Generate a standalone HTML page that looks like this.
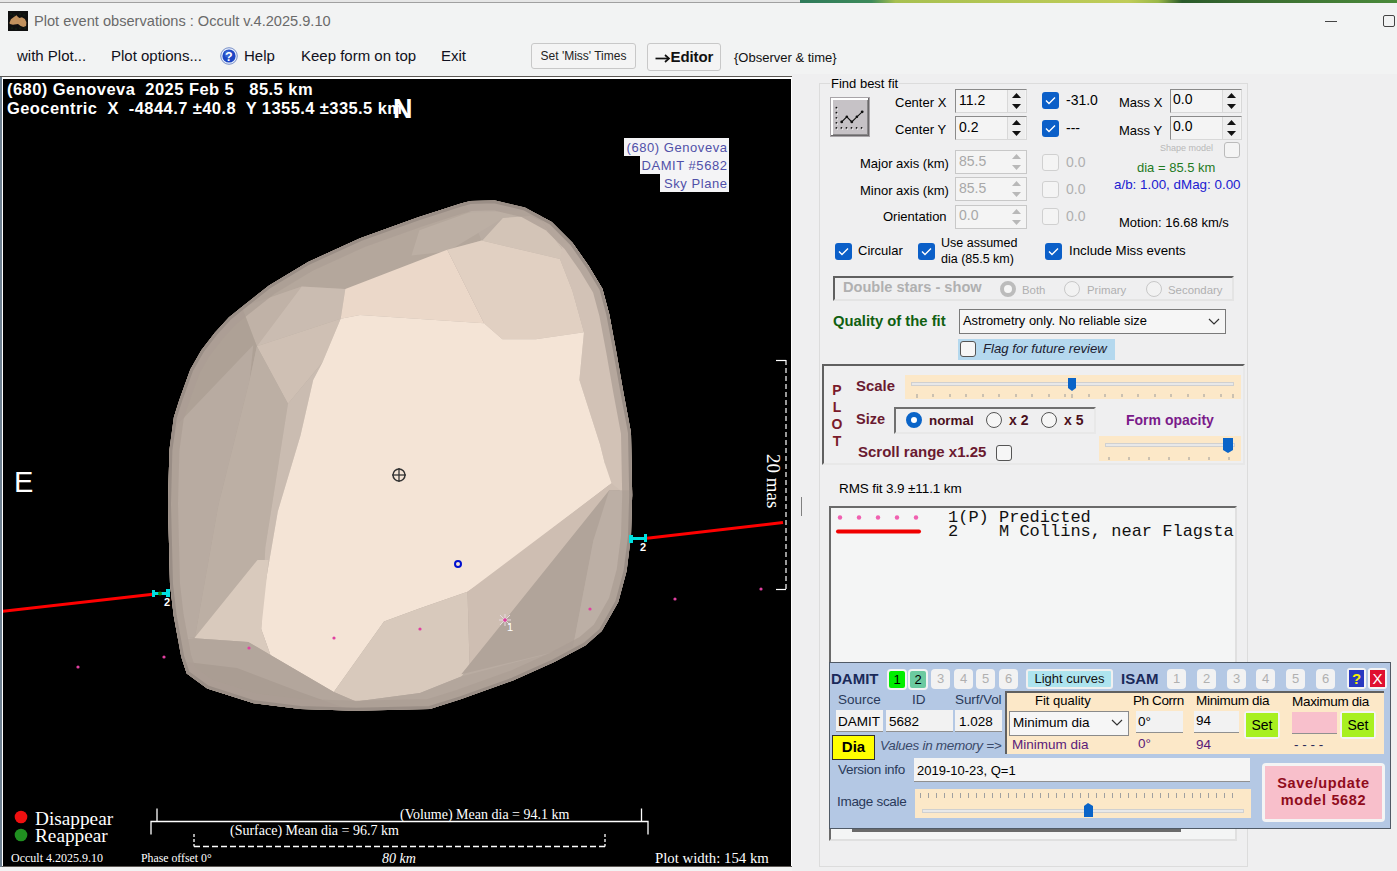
<!DOCTYPE html>
<html><head><meta charset="utf-8">
<style>
*{margin:0;padding:0;box-sizing:border-box}
html,body{width:1397px;height:871px;overflow:hidden;background:#f2f3f3;font-family:"Liberation Sans",sans-serif;color:#000}
.a{position:absolute;white-space:nowrap}
.ui{font-size:13px;line-height:15px}
.ser{font-family:"Liberation Serif",serif}
.mono{font-family:"Liberation Mono",monospace}
</style></head><body>
<!-- top strip -->
<div class="a" style="left:0;top:0;width:800px;height:3px;background:#e6e6e6;border-bottom:1px solid #a0a0a0"></div>
<div class="a" style="left:800px;top:0;width:597px;height:3px;background:linear-gradient(90deg,#2f7a5a 0%,#3d8a5a 12%,#a8c050 16%,#c0cc58 55%,#9ab848 60%,#2a5a2a 64%,#3a6a30 75%,#4a8a3a 100%)"></div>
<!-- title bar -->
<div class="a" style="left:8px;top:11px;width:20px;height:20px;background:#101010"></div>
<svg class="a" style="left:8px;top:11px" width="20" height="20"><path d="M1.4,11.9 L2.9,8.3 L5.9,6 L8.5,4.2 L10,6 L11.5,6.9 L13.9,6.3 L16.9,8 L18.4,11.3 L18.1,14.9 L15.4,16.1 L12.7,14.9 L10,13.1 L5,13.7 L2,13.1 Z" fill="#c2925e"/><g fill="#1d4a1d"><circle cx="3" cy="3" r=".6"/><circle cx="6" cy="4" r=".6"/><circle cx="12" cy="3" r=".6"/><circle cx="16" cy="4" r=".6"/><circle cx="4" cy="17" r=".6"/><circle cx="8" cy="18" r=".6"/><circle cx="12" cy="17" r=".6"/><circle cx="17" cy="17" r=".6"/></g></svg>
<div class="a" style="left:34px;top:12px;font-size:14.6px;line-height:18px;color:#6a6a6a">Plot event observations : Occult v.4.2025.9.10</div>
<div class="a" style="left:1325px;top:21px;width:12px;height:1px;background:#444"></div>
<div class="a" style="left:1383px;top:15px;width:12px;height:12px;border:1px solid #444;border-radius:2px"></div>
<!-- menu -->
<div class="a" style="left:17px;top:47px;font-size:15px;line-height:17px;color:#101020">with Plot...</div>
<div class="a" style="left:111px;top:47px;font-size:15px;line-height:17px;color:#101020">Plot options...</div>
<svg class="a" style="left:220px;top:47px" width="18" height="18"><circle cx="9" cy="9" r="8.3" fill="#e4ecfa" stroke="#7a90c8" stroke-width="1"/><circle cx="9" cy="9" r="6.6" fill="#1d46c4"/><circle cx="8" cy="7" r="3.5" fill="#4a78e0" opacity="0.6"/><text x="8.8" y="13.8" font-size="12.5" font-weight="bold" text-anchor="middle" fill="#fff" font-family="Liberation Sans">?</text></svg>
<div class="a" style="left:244px;top:47px;font-size:15px;line-height:17px;color:#101020">Help</div>
<div class="a" style="left:301px;top:47px;font-size:15px;line-height:17px;color:#101020">Keep form on top</div>
<div class="a" style="left:441px;top:47px;font-size:15px;line-height:17px;color:#101020">Exit</div>
<div class="a" style="left:531px;top:43px;width:105px;height:26px;border:1px solid #c8c8c8;border-radius:3px;background:#f4f4f4;font-size:12px;line-height:24px;text-align:center;color:#222">Set 'Miss' Times</div>
<div class="a" style="left:647px;top:43px;width:74px;height:28px;border:1px solid #c8c8c8;border-radius:3px;background:#f4f4f4"></div><svg class="a" style="left:655px;top:53px" width="16" height="10"><line x1="0.5" y1="5.5" x2="13.5" y2="5.5" stroke="#111" stroke-width="1.7"/><polyline points="10,2 14,5.5 10,9" fill="none" stroke="#111" stroke-width="1.7"/></svg><div class="a" style="left:670.5px;top:48px;font-size:15px;font-weight:bold;line-height:18px;color:#111;letter-spacing:-0.1px">Editor</div>
<div class="a" style="left:734px;top:49px;font-size:13px;line-height:17px;color:#111">{Observer &amp; time}</div>

<!-- plot frame -->
<div class="a" style="left:0;top:76px;width:792px;height:791px;background:#5c5854"></div>
<div class="a" style="left:0;top:77px;width:2px;height:790px;background:#6e8090"></div>
<div class="a" style="left:2px;top:77px;width:790px;height:789px;background:#fff"></div>
<div id="plot" class="a" style="left:3px;top:79px;width:788px;height:787px;background:#000;overflow:hidden"></div>

<!-- PLOT_SVG -->
<svg class="a" style="left:3px;top:79px" width="788" height="787" viewBox="3 79 788 787">
<g id="ast">
<defs><clipPath id="clipA"><polygon points="169.4,450.0 173.9,417.0 179.3,400.0 190.3,369.6 201.3,350.3 215.0,332.4 229.0,317.2 242.7,306.2 269.0,285.5 308.0,262.0 360.0,238.2 417.4,217.6 460.0,203.8 470.0,201.0 494.4,200.3 525.0,207.5 551.8,222.1 572.5,242.8 588.6,265.8 602.4,288.7 609.2,314.0 616.1,350.7 623.0,390.0 631.0,432.8 632.2,494.8 631.0,536.0 626.6,571.0 618.3,602.0 601.8,631.0 585.3,645.4 554.3,661.9 513.0,680.5 461.3,699.0 430.0,708.9 356.0,710.7 300.3,708.9 253.7,703.3 207.2,688.4 186.7,673.5 181.2,656.8 173.7,615.8 170.0,584.2 168.0,504.0"/></clipPath></defs>
<g clip-path="url(#clipA)">
<polygon points="150.0,150.0 700.0,150.0 700.0,750.0 150.0,750.0" fill="#b9aca2"/>
<polygon points="200.0,330.0 242.0,307.0 301.7,286.6 345.3,288.9 360.0,288.7 447.2,249.7 481.7,240.5 460.0,190.0 200.0,190.0" fill="#b4a79c"/>
<polygon points="411.5,255.4 419.4,230.2 468.2,212.8 526.5,210.5 545.0,216.0 502.9,218.0 447.7,251.4" fill="#bcafa4"/>
<polygon points="447.7,251.4 482.4,240.4 502.9,218.0 529.6,216.0 542.2,221.5 569.0,258.5 560.0,258.9 481.7,240.5" fill="#d3c4b7"/>
<polygon points="542.2,221.5 560.0,200.0 640.0,260.0 640.0,320.0 584.0,332.3 572.5,291.0 560.0,258.9 569.0,258.5" fill="#cdbeb2"/>
<polygon points="242.0,307.2 301.7,286.6 256.9,346.3" fill="#c0b2a7"/>
<polygon points="301.7,286.6 345.3,288.9 340.7,318.7 256.9,346.3" fill="#cabcb1"/>
<polygon points="256.9,346.3 340.7,318.7 322.4,362.4 288.0,403.7" fill="#cfc0b4"/>
<polygon points="242.0,307.2 256.9,346.3 249.7,380.0 218.5,504.9 195.0,637.5 150.0,640.0 150.0,300.0" fill="#aea196"/>
<polygon points="253.3,345.0 177.6,424.2 160.0,500.0 160.0,640.0 195.0,637.5 218.5,504.9 249.7,380.0" fill="#b8aba1"/>
<polygon points="256.9,346.3 288.0,403.7 265.3,547.8 261.4,629.8 195.0,637.5 218.5,504.9 249.7,380.0" fill="#bcafa4"/>
<polygon points="288.0,403.7 322.4,362.4 313.2,380.0 300.5,435.6 277.8,511.4 262.6,600.0 261.2,628.9 265.3,547.8" fill="#cabcb1"/>
<polygon points="345.3,288.9 447.2,249.7 484.0,323.2 360.0,315.0 340.7,318.7" fill="#ebd8c9"/>
<polygon points="447.2,249.7 481.7,240.5 560.0,258.9 572.5,291.0 584.0,332.3 535.8,339.2 502.4,339.2 484.0,323.2" fill="#e1d0c2"/>
<polygon points="560.0,258.9 563.3,242.8 620.0,250.0 640.0,300.0 640.0,500.0 609.2,488.0 604.6,462.7 600.0,444.3 579.4,380.0 584.0,332.3 572.5,291.0" fill="#d2c2b6"/>
<polygon points="340.7,318.7 360.0,315.0 484.0,323.2 502.4,339.2 535.8,339.2 584.0,332.3 579.4,380.0 600.0,444.3 604.6,462.7 611.5,483.3 485.3,580.0 467.5,591.7 420.0,608.2 384.0,621.4 333.8,692.1 270.5,654.9 261.2,628.9 262.6,600.0 277.8,511.4 300.5,435.6 313.2,380.0 322.4,362.4" fill="#f4e4d6"/>
<polygon points="333.8,692.1 384.0,621.4 420.0,608.2 467.5,591.7 469.6,666.0 461.3,676.4 420.0,692.9 356.0,701.4" fill="#d8c9bc"/>
<polygon points="611.5,483.3 620.0,490.0 461.3,674.3 469.6,666.0 467.5,591.7" fill="#cebeb2"/>
<polygon points="620.0,490.0 609.2,490.2 461.3,674.3 572.9,647.4 593.5,540.0" fill="#b1a49a"/>
<polygon points="609.2,490.2 640.0,490.2 640.0,531.5 635.0,580.0 601.8,631.0 572.9,647.4 593.5,540.0" fill="#bcafa5"/>
<polygon points="257.5,560.0 268.6,560.0 261.2,628.9 270.5,654.9 248.2,641.9 194.2,638.2" fill="#d9cabd"/>
<polygon points="150.0,645.6 194.2,638.2 248.2,641.9 270.5,654.9 333.8,692.1 356.0,701.4 420.0,692.9 461.3,676.4 572.9,647.4 601.8,631.0 640.0,640.0 640.0,740.0 150.0,740.0" fill="#b3a69c"/>
<polygon points="170.0,660.0 237.0,668.0 300.0,692.0 356.0,712.0 253.7,720.0 170.0,720.0" fill="#aa9d93"/>
<polygon points="169.4,450.0 173.9,417.0 179.3,400.0 190.3,369.6 201.3,350.3 215.0,332.4 229.0,317.2 242.7,306.2 269.0,285.5 308.0,262.0 360.0,238.2 417.4,217.6 460.0,203.8 470.0,201.0 494.4,200.3 525.0,207.5 551.8,222.1 572.5,242.8 588.6,265.8 602.4,288.7 609.2,314.0 616.1,350.7 623.0,390.0 631.0,432.8 632.2,494.8 631.0,536.0 626.6,571.0 618.3,602.0 601.8,631.0 585.3,645.4 554.3,661.9 513.0,680.5 461.3,699.0 430.0,708.9 356.0,710.7 300.3,708.9 253.7,703.3 207.2,688.4 186.7,673.5 181.2,656.8 173.7,615.8 170.0,584.2 168.0,504.0" fill="none" stroke="#ab9e94" stroke-width="20" stroke-opacity="0.75" stroke-linejoin="round"/>
<polygon points="169.4,450.0 173.9,417.0 179.3,400.0 190.3,369.6 201.3,350.3 215.0,332.4 229.0,317.2 242.7,306.2 269.0,285.5 308.0,262.0 360.0,238.2 417.4,217.6 460.0,203.8 470.0,201.0 494.4,200.3 525.0,207.5 551.8,222.1 572.5,242.8 588.6,265.8 602.4,288.7 609.2,314.0 616.1,350.7 623.0,390.0 631.0,432.8 632.2,494.8 631.0,536.0 626.6,571.0 618.3,602.0 601.8,631.0 585.3,645.4 554.3,661.9 513.0,680.5 461.3,699.0 430.0,708.9 356.0,710.7 300.3,708.9 253.7,703.3 207.2,688.4 186.7,673.5 181.2,656.8 173.7,615.8 170.0,584.2 168.0,504.0" fill="none" stroke="#9a8e86" stroke-width="6" stroke-linejoin="round"/>
</g>
</g>
<circle cx="78" cy="667" r="1.6" fill="#e040a0"/>
<circle cx="164" cy="657" r="1.6" fill="#e040a0"/>
<circle cx="249" cy="648" r="1.6" fill="#e040a0"/>
<circle cx="334" cy="638" r="1.6" fill="#e040a0"/>
<circle cx="420" cy="629" r="1.6" fill="#e040a0"/>
<circle cx="505" cy="620" r="1.6" fill="#e040a0"/>
<circle cx="590" cy="609" r="1.6" fill="#e040a0"/>
<circle cx="675" cy="599" r="1.6" fill="#e040a0"/>
<circle cx="761" cy="589" r="1.6" fill="#e040a0"/>
<circle cx="399" cy="475" r="6" fill="none" stroke="#333" stroke-width="1.5"/>
<line x1="392" y1="475" x2="406" y2="475" stroke="#333" stroke-width="1.3"/>
<line x1="399" y1="468" x2="399" y2="482" stroke="#333" stroke-width="1.3"/>
<circle cx="458" cy="564" r="3" fill="none" stroke="#0010d0" stroke-width="2"/>
<g stroke="#e8d8e0" stroke-width="1"><line x1="500" y1="615" x2="510" y2="625"/><line x1="510" y1="615" x2="500" y2="625"/><line x1="505" y1="614" x2="505" y2="626"/><line x1="499" y1="620" x2="511" y2="620"/></g>
<circle cx="505" cy="620" r="1.8" fill="#e040a0"/>
<text x="507" y="631" font-family="Liberation Sans" font-size="11" fill="#fff">1</text>
<line x1="0" y1="611.5" x2="153" y2="594.3" stroke="#ff0000" stroke-width="3"/>
<line x1="647" y1="538.3" x2="783" y2="522.5" stroke="#ff0000" stroke-width="3"/>
<g fill="#00e0e0"><rect x="152" y="590" width="3" height="7"/><rect x="155" y="592" width="14" height="3"/><rect x="166" y="589" width="4" height="8"/><rect x="629" y="535" width="4" height="8"/><rect x="631" y="537" width="14" height="3"/><rect x="644" y="534" width="3" height="8"/></g>
<circle cx="160" cy="593.5" r="2" fill="#109010"/>
<text x="164" y="606" font-family="Liberation Sans" font-size="11" font-weight="bold" fill="#fff">2</text>
<text x="640" y="551" font-family="Liberation Sans" font-size="11" font-weight="bold" fill="#fff">2</text>
<!-- N / E -->
<text x="14" y="492" font-family="Liberation Sans" font-size="29" fill="#fff">E</text>
<!-- right dashed scale -->
<g stroke="#fff" stroke-width="1.2" fill="none"><line x1="776" y1="360.5" x2="786" y2="360.5"/><line x1="776" y1="589.5" x2="786" y2="589.5"/><line x1="786" y1="360" x2="786" y2="590" stroke-dasharray="5,3"/></g>
<text transform="translate(767,454) rotate(90)" font-family="Liberation Serif" font-size="19" fill="#fff">20 mas</text>
<!-- bottom scale bars -->
<g stroke="#fff" stroke-width="1.3" fill="none">
<polyline points="151,834.5 151,821.5 648,821.5 648,834.5"/>
<line x1="157" y1="808.5" x2="157" y2="821.5"/><line x1="641.5" y1="808.5" x2="641.5" y2="821.5"/>
<line x1="194" y1="834" x2="194" y2="846.5" stroke-dasharray="3,2"/>
<line x1="605" y1="834" x2="605" y2="846.5" stroke-dasharray="3,2"/>
<line x1="194" y1="846.5" x2="605" y2="846.5" stroke-dasharray="6,3"/>
</g>
<text x="400" y="819" font-family="Liberation Serif" font-size="14" fill="#fff">(Volume) Mean dia = 94.1 km</text>
<text x="230" y="834.5" font-family="Liberation Serif" font-size="14" fill="#fff">(Surface) Mean dia = 96.7 km</text>
<circle cx="21" cy="817" r="6.3" fill="#f01010"/>
<circle cx="21" cy="835" r="6.3" fill="#209020"/>
<text x="35" y="824.5" font-family="Liberation Serif" font-size="19.3" fill="#fff">Disappear</text>
<text x="35" y="841.5" font-family="Liberation Serif" font-size="19.3" fill="#fff">Reappear</text>
<text x="11" y="862" font-family="Liberation Serif" font-size="12" fill="#fff">Occult 4.2025.9.10</text>
<text x="141" y="862" font-family="Liberation Serif" font-size="11.8" fill="#fff">Phase offset 0°</text>
<text x="382" y="863" font-family="Liberation Serif" font-size="14" font-style="italic" fill="#fff">80 km</text>
<text x="655" y="863" font-family="Liberation Serif" font-size="14.8" fill="#fff">Plot width: 154 km</text>
</svg>
<div class="a" style="left:7px;top:80px;font-size:16.5px;line-height:19px;font-weight:bold;color:#fff;letter-spacing:0.45px">(680) Genoveva&nbsp; 2025 Feb 5 &nbsp; 85.5 km</div>
<div class="a" style="left:7px;top:99px;font-size:16.5px;line-height:19px;font-weight:bold;color:#fff;letter-spacing:0.42px">Geocentric&nbsp; X&nbsp; -4844.7 ±40.8&nbsp; Y 1355.4 ±335.5 km</div>
<div class="a" style="left:393px;top:95px;font-size:27px;line-height:28px;font-weight:bold;color:#fff">N</div>
<div class="a" style="left:624px;top:138px;width:105px;height:18px;background:#f4f4f6"></div>
<div class="a" style="left:640px;top:156px;width:89px;height:18px;background:#f4f4f6"></div>
<div class="a" style="left:660px;top:174px;width:69px;height:18px;background:#f4f4f6"></div>
<div class="a" style="left:604px;top:139px;width:123.5px;text-align:right;font-size:13px;line-height:18px;color:#5050a8;letter-spacing:0.55px">(680) Genoveva<br>DAMIT #5682<br>Sky Plane</div>

<!-- RIGHT_PANEL -->
<style>
.dp{background:#efeff0}
.tb{position:absolute;background:#f4f4f4;border:1px solid #7a7a7a;border-color:#8a8a8a #d8d8d8 #d8d8d8 #8a8a8a}
.spin{position:absolute;width:18px;background:#eeeeee;border-left:1px solid #d8d8d8}
.cb{position:absolute;width:17px;height:17px;border-radius:3px;background:#0b5fc8}
.cbo{position:absolute;width:16px;height:16px;border-radius:3px;border:1px solid #555;background:#f6f6f6}
.cbd{position:absolute;width:17px;height:17px;border-radius:3px;border:1px solid #d0d0d0;background:#f4f4f4}
.rad{position:absolute;width:16px;height:16px;border-radius:50%;border:1px solid #555;background:#f6f6f6}
.bd{font-weight:bold}
.dbtn{position:absolute;width:19px;height:20px;border-radius:4px;background:#f2f2f2;font-size:13px;line-height:20px;text-align:center;color:#b0b0b0}
</style>
<!-- panel background dotted area -->
<div class="a dp" style="left:792px;top:74px;width:605px;height:797px"></div>
<!-- main group box -->
<div class="a" style="left:819px;top:83px;width:429px;height:784px;border:1px solid #dcdcdc"></div>
<div class="a ui" style="left:830px;top:76px;background:#efeff0;padding:0 1px">Find best fit</div>
<!-- fit button -->
<svg class="a" style="left:830px;top:97px" width="40" height="40">
<rect x="0" y="0" width="40" height="40" fill="#a8a4a8"/>
<rect x="1" y="1" width="38" height="38" fill="#6a686a"/>
<rect x="1" y="1" width="37" height="37" fill="#ffffff"/>
<rect x="3" y="3" width="35" height="35" fill="#8a888a"/>
<rect x="3" y="3" width="34" height="34" fill="#c6c2c6"/>
<g fill="#111"><circle cx="6.4" cy="10.7" r="0.9"/><circle cx="6.4" cy="15.7" r="0.9"/><circle cx="6.4" cy="20.8" r="0.9"/><circle cx="6.4" cy="25.8" r="0.9"/><circle cx="6.4" cy="30.9" r="0.9"/><circle cx="11.4" cy="30.9" r="0.9"/><circle cx="16.5" cy="30.9" r="0.9"/><circle cx="21.5" cy="30.9" r="0.9"/><circle cx="26.6" cy="30.9" r="0.9"/><circle cx="31.6" cy="30.9" r="0.9"/>
<circle cx="11.7" cy="24.9" r="1.4"/><circle cx="16.8" cy="19.8" r="1.3"/><circle cx="21.8" cy="24.9" r="1.4"/><circle cx="26.9" cy="19.8" r="1.3"/><circle cx="32.2" cy="14.8" r="1.4"/></g>
<g fill="#fff" opacity="0.8"><circle cx="7.4" cy="12" r="0.8"/><circle cx="7.4" cy="17" r="0.8"/><circle cx="7.4" cy="22" r="0.8"/><circle cx="7.4" cy="27" r="0.8"/><circle cx="7.4" cy="32" r="0.8"/><circle cx="12.4" cy="32" r="0.8"/><circle cx="17.5" cy="32" r="0.8"/><circle cx="22.5" cy="32" r="0.8"/><circle cx="27.6" cy="32" r="0.8"/><circle cx="32.6" cy="32" r="0.8"/></g>
<polyline points="11.7,24.9 16.8,19.8 21.8,24.9 26.9,19.8 32.2,14.8" fill="none" stroke="#111" stroke-width="1.1"/>
</svg>

<div class="a ui" style="left:895px;top:95px">Center X</div>
<div class="tb" style="left:955px;top:89px;width:72px;height:24px"></div>
<div class="a ui" style="left:959px;top:93px;font-size:14px">11.2</div>
<div class="spin" style="left:1007px;top:90px;height:22px"></div>
<div class="a ui" style="left:895px;top:122px">Center Y</div>
<div class="tb" style="left:955px;top:116px;width:72px;height:24px"></div>
<div class="a ui" style="left:959px;top:120px;font-size:14px">0.2</div>
<div class="spin" style="left:1007px;top:117px;height:22px"></div>
<svg class="a" style="left:1007px;top:89px" width="20" height="52"><g fill="#111"><path d="M5,9 L14,9 L9.5,4 Z"/><path d="M5,15 L14,15 L9.5,20 Z"/><path d="M5,36 L14,36 L9.5,31 Z"/><path d="M5,42 L14,42 L9.5,47 Z"/></g></svg>
<div class="cb" style="left:1042px;top:92px"></div>
<div class="cb" style="left:1042px;top:120px"></div>
<svg class="a" style="left:1042px;top:92px" width="17" height="46"><polyline points="4,8.5 7,11.5 13,5.5" fill="none" stroke="#fff" stroke-width="1.4"/><polyline points="4,36.5 7,39.5 13,33.5" fill="none" stroke="#fff" stroke-width="1.4"/></svg>
<div class="a ui" style="left:1066px;top:93px;font-size:14px">-31.0</div>
<div class="a ui" style="left:1066px;top:121px;font-size:14px">---</div>
<div class="a ui" style="left:1119px;top:95px">Mass X</div>
<div class="a ui" style="left:1119px;top:123px">Mass Y</div>
<div class="tb" style="left:1170px;top:89px;width:72px;height:24px"></div>
<div class="a ui" style="left:1173px;top:92px;font-size:14px">0.0</div>
<div class="tb" style="left:1170px;top:116px;width:72px;height:24px"></div>
<div class="a ui" style="left:1173px;top:119px;font-size:14px">0.0</div>
<div class="spin" style="left:1222px;top:90px;height:22px"></div>
<div class="spin" style="left:1222px;top:117px;height:22px"></div>
<svg class="a" style="left:1222px;top:89px" width="20" height="52"><g fill="#111"><path d="M5,9 L14,9 L9.5,4 Z"/><path d="M5,15 L14,15 L9.5,20 Z"/><path d="M5,36 L14,36 L9.5,31 Z"/><path d="M5,42 L14,42 L9.5,47 Z"/></g></svg>
<div class="a" style="left:1160px;top:143px;font-size:9px;line-height:10px;color:#b8b8b8">Shape model</div>
<div class="cbd" style="left:1224px;top:142px;width:16px;height:16px;border-color:#bbb"></div>

<div class="a ui" style="left:860px;top:156px">Major axis (km)</div>
<div class="a ui" style="left:860px;top:183px">Minor axis (km)</div>
<div class="a ui" style="left:883px;top:209px">Orientation</div>
<div class="tb" style="left:955px;top:150px;width:72px;height:24px;border-color:#c8c8c8"></div>
<div class="tb" style="left:955px;top:177px;width:72px;height:24px;border-color:#c8c8c8"></div>
<div class="tb" style="left:955px;top:205px;width:72px;height:24px;border-color:#c8c8c8"></div>
<div class="a ui" style="left:959px;top:154px;font-size:14px;color:#a8a8a8">85.5</div>
<div class="a ui" style="left:959px;top:181px;font-size:14px;color:#a8a8a8">85.5</div>
<div class="a ui" style="left:959px;top:208px;font-size:14px;color:#a8a8a8">0.0</div>
<svg class="a" style="left:1007px;top:150px" width="20" height="80"><g fill="#b8b8b8"><path d="M5,9 L14,9 L9.5,4 Z"/><path d="M5,15 L14,15 L9.5,20 Z"/><path d="M5,36 L14,36 L9.5,31 Z"/><path d="M5,42 L14,42 L9.5,47 Z"/><path d="M5,64 L14,64 L9.5,59 Z"/><path d="M5,70 L14,70 L9.5,75 Z"/></g></svg>
<div class="cbd" style="left:1042px;top:154px"></div>
<div class="cbd" style="left:1042px;top:181px"></div>
<div class="cbd" style="left:1042px;top:208px"></div>
<div class="a ui" style="left:1066px;top:155px;font-size:14px;color:#b0b0b0">0.0</div>
<div class="a ui" style="left:1066px;top:182px;font-size:14px;color:#b0b0b0">0.0</div>
<div class="a ui" style="left:1066px;top:209px;font-size:14px;color:#b0b0b0">0.0</div>
<div class="a ui" style="left:1137px;top:160px;color:#1f7a1f">dia = 85.5 km</div>
<div class="a ui" style="left:1114px;top:177px;color:#2020d0;font-size:13.4px">a/b: 1.00, dMag: 0.00</div>
<div class="a ui" style="left:1119px;top:215px">Motion: 16.68 km/s</div>

<div class="cb" style="left:835px;top:243px"></div>
<div class="cb" style="left:918px;top:243px"></div>
<div class="cb" style="left:1045px;top:243px"></div>
<svg class="a" style="left:835px;top:243px" width="230" height="17"><g fill="none" stroke="#fff" stroke-width="1.4"><polyline points="4,8.5 7,11.5 13,5.5"/><polyline points="87,8.5 90,11.5 96,5.5"/><polyline points="214,8.5 217,11.5 223,5.5"/></g></svg>
<div class="a ui" style="left:858px;top:243px;font-size:13px">Circular</div>
<div class="a ui" style="left:941px;top:235px;font-size:12.5px;line-height:16px">Use assumed<br>dia (85.5 km)</div>
<div class="a ui" style="left:1069px;top:243px;font-size:13.3px">Include Miss events</div>

<!-- double stars -->
<div class="a" style="left:833px;top:276px;width:401px;height:25px;border:2px solid;border-color:#606060 #e4e4e4 #e4e4e4 #606060"></div>
<div class="a ui bd" style="left:843px;top:280px;font-size:14.6px;color:#b0b0b0">Double stars - show</div>
<div class="rad" style="left:1000px;top:281px;border:4px solid #bcbcbc;background:#f6f6f6"></div>
<div class="a ui" style="left:1022px;top:283px;font-size:11.4px;color:#b0b0b0">Both</div>
<div class="rad" style="left:1064px;top:281px;border-color:#c8c8c8;background:#f2f2f2"></div>
<div class="a ui" style="left:1087px;top:283px;font-size:11.4px;color:#b0b0b0">Primary</div>
<div class="rad" style="left:1146px;top:281px;border-color:#c8c8c8;background:#f2f2f2"></div>
<div class="a ui" style="left:1168px;top:283px;font-size:11.4px;color:#b0b0b0">Secondary</div>

<div class="a ui bd" style="left:833px;top:314px;font-size:14.8px;color:#106010">Quality of the fit</div>
<div class="a" style="left:959px;top:309px;width:267px;height:25px;border:1px solid #7a7a7a;background:#f6f6f6"></div>
<div class="a ui" style="left:963px;top:313px;font-size:12.9px">Astrometry only. No reliable size</div>
<svg class="a" style="left:1207px;top:316px" width="14" height="10"><polyline points="2,3 7,8 12,3" fill="none" stroke="#333" stroke-width="1.2"/></svg>
<div class="a" style="left:958px;top:339px;width:157px;height:21px;background:#b4d8ee"></div>
<div class="cbo" style="left:960px;top:341px"></div>
<div class="a ui" style="left:983px;top:341px;font-size:13.2px;font-style:italic;color:#202030">Flag for future review</div>

<!-- PLOT group -->
<div class="a" style="left:822px;top:364px;width:423px;height:101px;border:2px solid;border-color:#606060 #e8e8e8 #e8e8e8 #606060"></div>
<div class="a bd" style="left:831px;top:382px;font-size:14px;line-height:17px;color:#7a1a2a;text-align:center;width:12px;white-space:normal">P<br>L<br>O<br>T</div>
<div class="a ui bd" style="left:856px;top:379px;font-size:14.9px;color:#6a1a30">Scale</div>
<div class="a" style="left:905px;top:375px;width:336px;height:24px;background:#fce8c8"></div>
<div class="a" style="left:911px;top:382px;width:323px;height:4px;background:#e8e8e8;border:1px solid #d0d0d0"></div>
<svg class="a" style="left:905px;top:375px" width="336" height="24"><path d="M163,3 L171,3 L171,13 L167,16 L163,13 Z" fill="#0a64c8"/><g stroke="#9a9a9a" stroke-width="1">
<line x1="12" y1="19" x2="12" y2="23"/><line x1="28" y1="19" x2="28" y2="22"/><line x1="45" y1="19" x2="45" y2="22"/><line x1="61" y1="19" x2="61" y2="22"/><line x1="78" y1="19" x2="78" y2="22"/><line x1="94" y1="19" x2="94" y2="22"/><line x1="111" y1="19" x2="111" y2="22"/><line x1="127" y1="19" x2="127" y2="22"/><line x1="144" y1="19" x2="144" y2="22"/><line x1="160" y1="19" x2="160" y2="22"/><line x1="167" y1="19" x2="167" y2="23"/><line x1="184" y1="19" x2="184" y2="22"/><line x1="200" y1="19" x2="200" y2="22"/><line x1="217" y1="19" x2="217" y2="22"/><line x1="233" y1="19" x2="233" y2="22"/><line x1="250" y1="19" x2="250" y2="22"/><line x1="266" y1="19" x2="266" y2="22"/><line x1="283" y1="19" x2="283" y2="22"/><line x1="299" y1="19" x2="299" y2="22"/><line x1="316" y1="19" x2="316" y2="22"/><line x1="328" y1="19" x2="328" y2="23"/></g></svg>
<div class="a ui bd" style="left:856px;top:412px;font-size:14.5px;color:#6a1a30">Size</div>
<div class="a" style="left:894px;top:407px;width:202px;height:27px;border:2px solid;border-color:#707070 #e8e8e8 #e8e8e8 #707070"></div>
<div class="rad" style="left:906px;top:412px;border:5px solid #0a64c8;background:#fff"></div>
<div class="a ui bd" style="left:929px;top:413px;font-size:13.4px;color:#4a1020">normal</div>
<div class="rad" style="left:986px;top:412px"></div>
<div class="a ui bd" style="left:1009px;top:413px;font-size:14px;color:#4a1020">x 2</div>
<div class="rad" style="left:1041px;top:412px"></div>
<div class="a ui bd" style="left:1064px;top:413px;font-size:14px;color:#4a1020">x 5</div>
<div class="a ui bd" style="left:1126px;top:413px;font-size:14px;color:#7a1a8a">Form opacity</div>
<div class="a" style="left:1099px;top:436px;width:142px;height:25px;background:#fce8c8"></div>
<div class="a" style="left:1105px;top:443px;width:130px;height:4px;background:#e8e8e8;border:1px solid #d0d0d0"></div>
<svg class="a" style="left:1099px;top:436px" width="142" height="25"><path d="M124,2 L134,2 L134,14 L129,17 L124,14 Z" fill="#0a64c8"/><g stroke="#9a9a9a"><line x1="10" y1="21" x2="10" y2="24"/><line x1="30" y1="21" x2="30" y2="24"/><line x1="50" y1="21" x2="50" y2="24"/><line x1="70" y1="21" x2="70" y2="24"/><line x1="90" y1="21" x2="90" y2="24"/><line x1="110" y1="21" x2="110" y2="24"/><line x1="130" y1="21" x2="130" y2="24"/></g></svg>
<div class="a ui bd" style="left:858px;top:444px;font-size:15px;color:#6a1a30">Scroll range x1.25</div>
<div class="cbo" style="left:996px;top:445px"></div>

<!-- splitter handle -->
<div class="a" style="left:801px;top:497px;width:1px;height:19px;background:#808080"></div>

<div class="a ui" style="left:839px;top:481px;font-size:13.5px;letter-spacing:-0.12px">RMS fit 3.9 ±11.1 km</div>
<!-- listbox -->
<div class="a" style="left:829px;top:506px;width:408px;height:335px;background:#f4f5f5;border:2px solid;border-color:#6a6a6a #e0e0e0 #e0e0e0 #6a6a6a"></div>
<svg class="a" style="left:831px;top:508px" width="100" height="30"><g fill="#f060b0"><circle cx="9" cy="9.5" r="2.2"/><circle cx="28" cy="9.5" r="2.2"/><circle cx="47" cy="9.5" r="2.2"/><circle cx="66" cy="9.5" r="2.2"/><circle cx="85" cy="9.5" r="2.2"/></g><line x1="7" y1="23.5" x2="88" y2="23.5" stroke="#f00000" stroke-width="4" stroke-linecap="round"/></svg>
<div class="a mono" style="left:948px;top:511px;font-size:17px;line-height:14px;color:#111;white-space:pre">1(P) Predicted<br>2    M Collins, near Flagsta</div>
<!-- bottom line below listbox -->
<div class="a" style="left:852px;top:829px;width:329px;height:3px;background:#6a6a6a"></div>

<!-- DAMIT panel -->
<div class="a" style="left:829px;top:662px;width:562px;height:167px;background:#b4c8e4;border:1px solid #505a66"></div>
<div class="a bd" style="left:831px;top:670px;font-size:15px;line-height:18px;color:#1a2a5a">DAMIT</div>
<div class="dbtn" style="left:887px;top:669px;background:#00ee00;color:#000;border:2px solid #f4f4f4;width:20px;height:21px;line-height:17px">1</div>
<div class="dbtn" style="left:908px;top:669px;background:#6ccaa0;color:#000;border:2px solid #f4f4f4;width:20px;height:21px;line-height:17px">2</div>
<div class="dbtn" style="left:931px;top:669px">3</div>
<div class="dbtn" style="left:954px;top:669px">4</div>
<div class="dbtn" style="left:976px;top:669px">5</div>
<div class="dbtn" style="left:999px;top:669px">6</div>
<div class="a" style="left:1026px;top:669px;width:87px;height:20px;background:#aee4ee;border:2px solid #f0f0f0;border-radius:3px;font-size:13px;line-height:16px;text-align:center;color:#111">Light curves</div>
<div class="a bd" style="left:1121px;top:670px;font-size:15px;line-height:18px;color:#1a2a5a">ISAM</div>
<div class="dbtn" style="left:1167px;top:669px">1</div>
<div class="dbtn" style="left:1197px;top:669px">2</div>
<div class="dbtn" style="left:1227px;top:669px">3</div>
<div class="dbtn" style="left:1256px;top:669px">4</div>
<div class="dbtn" style="left:1286px;top:669px">5</div>
<div class="dbtn" style="left:1316px;top:669px">6</div>
<div class="a" style="left:1347px;top:668px;width:19px;height:21px;background:#f4f4f4;border-radius:3px"></div>
<div class="a bd" style="left:1349px;top:670px;width:15px;height:17px;background:#2838c0;color:#f8f000;font-size:15px;line-height:17px;text-align:center">?</div>
<div class="a" style="left:1368px;top:668px;width:19px;height:21px;background:#f4f4f4;border-radius:3px"></div>
<div class="a" style="left:1370px;top:670px;width:15px;height:17px;background:#e01030;color:#fff;font-size:15px;line-height:17px;text-align:center">X</div>

<div class="a ui" style="left:838px;top:692px;font-size:13.5px;color:#2a3a5a">Source</div>
<div class="a ui" style="left:912px;top:692px;font-size:13.5px;color:#2a3a5a">ID</div>
<div class="a ui" style="left:955px;top:692px;font-size:13.5px;color:#2a3a5a;letter-spacing:-0.1px">Surf/Vol</div>
<div class="a" style="left:836px;top:710px;width:47px;height:22px;background:#f2f2f2;border-bottom:1px solid #909090"></div>
<div class="a" style="left:886px;top:710px;width:67px;height:22px;background:#f2f2f2;border-bottom:1px solid #909090"></div>
<div class="a" style="left:955px;top:710px;width:47px;height:22px;background:#f2f2f2;border-bottom:1px solid #909090"></div>
<div class="a ui" style="left:838px;top:714px;font-size:13.5px">DAMIT</div>
<div class="a ui" style="left:889px;top:714px;font-size:13.5px">5682</div>
<div class="a ui" style="left:959px;top:714px;font-size:13.5px">1.028</div>
<div class="a" style="left:832px;top:735px;width:43px;height:25px;background:#ffff00;border:1px solid #303030"></div>
<div class="a bd" style="left:832px;top:738px;width:43px;text-align:center;font-size:15px;line-height:18px">Dia</div>
<div class="a ui" style="left:880px;top:738px;font-size:13.5px;font-style:italic;color:#3a4a6a;letter-spacing:-0.3px">Values in memory =&gt;</div>

<div class="a" style="left:1005px;top:691px;width:379px;height:63px;background:#fce8c8;border-left:2px solid #606060;border-top:2px solid #606060"></div>
<div class="a ui" style="left:1035px;top:693px;font-size:13px">Fit quality</div>
<div class="a ui" style="left:1133px;top:693px;font-size:13.5px;letter-spacing:-0.4px">Ph Corrn</div>
<div class="a ui" style="left:1196px;top:693px;font-size:13.5px;letter-spacing:-0.3px">Minimum dia</div>
<div class="a ui" style="left:1292px;top:694px;font-size:13.5px;letter-spacing:-0.3px">Maximum dia</div>
<div class="a" style="left:1009px;top:711px;width:120px;height:25px;background:#f6f6f6;border:1px solid #8a8a8a"></div>
<div class="a ui" style="left:1013px;top:715px;font-size:13.5px">Minimum dia</div>
<svg class="a" style="left:1110px;top:718px" width="14" height="10"><polyline points="2,2 7,7 12,2" fill="none" stroke="#333" stroke-width="1.2"/></svg>
<div class="a" style="left:1136px;top:711px;width:47px;height:22px;background:#f2f2f2;border-bottom:1px solid #909090"></div>
<div class="a ui" style="left:1138px;top:714px;font-size:13.5px">0°</div>
<div class="a" style="left:1194px;top:711px;width:45px;height:22px;background:#f2f2f2;border-bottom:1px solid #909090"></div>
<div class="a ui" style="left:1196px;top:713px;font-size:13.5px">94</div>
<div class="a" style="left:1244px;top:711px;width:36px;height:28px;background:#f4f4f4;border-radius:4px"></div>
<div class="a" style="left:1246px;top:713px;width:32px;height:24px;background:#a8f020;font-size:14px;line-height:24px;text-align:center">Set</div>
<div class="a" style="left:1292px;top:712px;width:45px;height:22px;background:#f8c0cc;border-bottom:1px solid #909090"></div>
<div class="a" style="left:1340px;top:711px;width:36px;height:28px;background:#f4f4f4;border-radius:4px"></div>
<div class="a" style="left:1342px;top:713px;width:32px;height:24px;background:#a8f020;font-size:14px;line-height:24px;text-align:center">Set</div>
<div class="a ui" style="left:1012px;top:737px;font-size:13.5px;color:#5a1a7a">Minimum dia</div>
<div class="a ui" style="left:1138px;top:736px;font-size:13.5px;color:#5a1a7a">0°</div>
<div class="a ui" style="left:1196px;top:737px;font-size:13.5px;color:#5a1a7a">94</div>
<div class="a ui" style="left:1294px;top:737px;font-size:13.5px;color:#2a2a5a">- - - -</div>

<div class="a ui" style="left:838px;top:762px;font-size:13.5px;color:#2a3a5a;letter-spacing:-0.3px">Version info</div>
<div class="a" style="left:914px;top:758px;width:336px;height:24px;background:#f4f4f4;border-bottom:1px solid #909090"></div>
<div class="a ui" style="left:917px;top:763px;font-size:13px">2019-10-23, Q=1</div>
<div class="a ui" style="left:837px;top:794px;font-size:13.5px;color:#2a3a5a;letter-spacing:-0.3px">Image scale</div>
<div class="a" style="left:915px;top:789px;width:336px;height:29px;background:#fce8c8"></div>
<div class="a" style="left:922px;top:809px;width:322px;height:4px;background:#e8e8e8;border:1px solid #d0d0d0"></div>
<svg class="a" style="left:915px;top:789px" width="336" height="29"><path d="M169,17 L173,14 L178,17 L178,28 L169,28 Z" fill="#0a64c8"/></svg>
<div class="a" style="left:920px;top:793px;width:320px;height:5px;background:repeating-linear-gradient(90deg,#a0a0a0 0 1px,transparent 1px 8px)"></div>
<div class="a" style="left:1262px;top:763px;width:123px;height:59px;background:#f4f4f4;border-radius:4px"></div>
<div class="a bd" style="left:1265px;top:766px;width:117px;height:53px;background:#f8bfcb;color:#900c1c;font-size:14.5px;line-height:16.5px;text-align:center;padding-top:9px;letter-spacing:0.65px">Save/update<br>model 5682</div>

</body></html>
